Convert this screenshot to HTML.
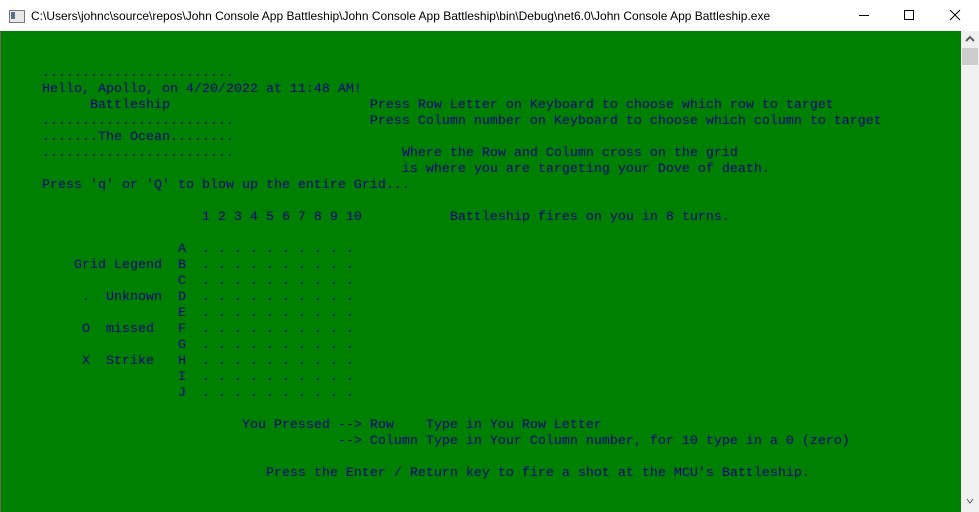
<!DOCTYPE html>
<html><head><meta charset="utf-8"><style>
html,body{margin:0;padding:0;width:979px;height:512px;overflow:hidden;background:#fff}
#title{position:absolute;left:0;top:0;width:979px;height:31px;background:#fff;font-family:"Liberation Sans",sans-serif;font-size:12px;color:#000}
#title .t{position:absolute;left:31px;top:9px;white-space:nowrap}
#icon{position:absolute;left:9px;top:10px;width:14px;height:11px;border:1px solid #777;background:#e8e8e8}
#icon:before{content:"";position:absolute;left:1px;top:1px;width:4px;height:7px;background:#5a6f8a}
#con{position:absolute;left:0;top:31px;width:961px;height:481px;background:#008000;border-left:1px solid #666}
pre{position:absolute;left:9px;top:3px;margin:0;font-family:"Liberation Mono",monospace;font-size:13.33px;line-height:16px;color:#000080}
#sb{position:absolute;left:961px;top:31px;width:18px;height:481px;background:#f0f0f0}
#thumb{position:absolute;left:1px;top:17px;width:16px;height:17px;background:#cdcdcd}
</style></head><body>
<div id="title"><div id="icon"></div><div class="t">C:\Users\johnc\source\repos\John Console App Battleship\John Console App Battleship\bin\Debug\net6.0\John Console App Battleship.exe</div>
<svg style="position:absolute;left:780px;top:0" width="199" height="31">
<line x1="79" y1="15.5" x2="89" y2="15.5" stroke="#000" stroke-width="1"/>
<rect x="124.5" y="10.5" width="9" height="9" fill="none" stroke="#000"/>
<path d="M170 10 L180 20 M180 10 L170 20" stroke="#000" stroke-width="1"/>
</svg></div>
<div id="con"><pre>


    ........................
    Hello, Apollo, on 4/20/2022 at 11:48 AM!
          Battleship                         Press Row Letter on Keyboard to choose which row to target
    ........................                 Press Column number on Keyboard to choose which column to target
    .......The Ocean........
    ........................                     Where the Row and Column cross on the grid
                                                 is where you are targeting your Dove of death.
    Press 'q' or 'Q' to blow up the entire Grid...

                        1 2 3 4 5 6 7 8 9 10           Battleship fires on you in 8 turns.

                     A  . . . . . . . . . .
        Grid Legend  B  . . . . . . . . . .
                     C  . . . . . . . . . .
         .  Unknown  D  . . . . . . . . . .
                     E  . . . . . . . . . .
         O  missed   F  . . . . . . . . . .
                     G  . . . . . . . . . .
         X  Strike   H  . . . . . . . . . .
                     I  . . . . . . . . . .
                     J  . . . . . . . . . .

                             You Pressed --> Row    Type in You Row Letter
                                         --> Column Type in Your Column number, for 10 type in a 0 (zero)

                                Press the Enter / Return key to fire a shot at the MCU's Battleship.
</pre></div>
<div id="sb"><svg width="18" height="17" style="position:absolute;left:0;top:0"><path d="M5 10 L9 6 L13 10" stroke="#606060" stroke-width="2" fill="none"/></svg><div id="thumb"></div>
<svg width="18" height="17" style="position:absolute;left:0;top:462px"><path d="M6 6 L9 10 L12 6" stroke="#606060" stroke-width="1" fill="none"/></svg></div>
</body></html>
